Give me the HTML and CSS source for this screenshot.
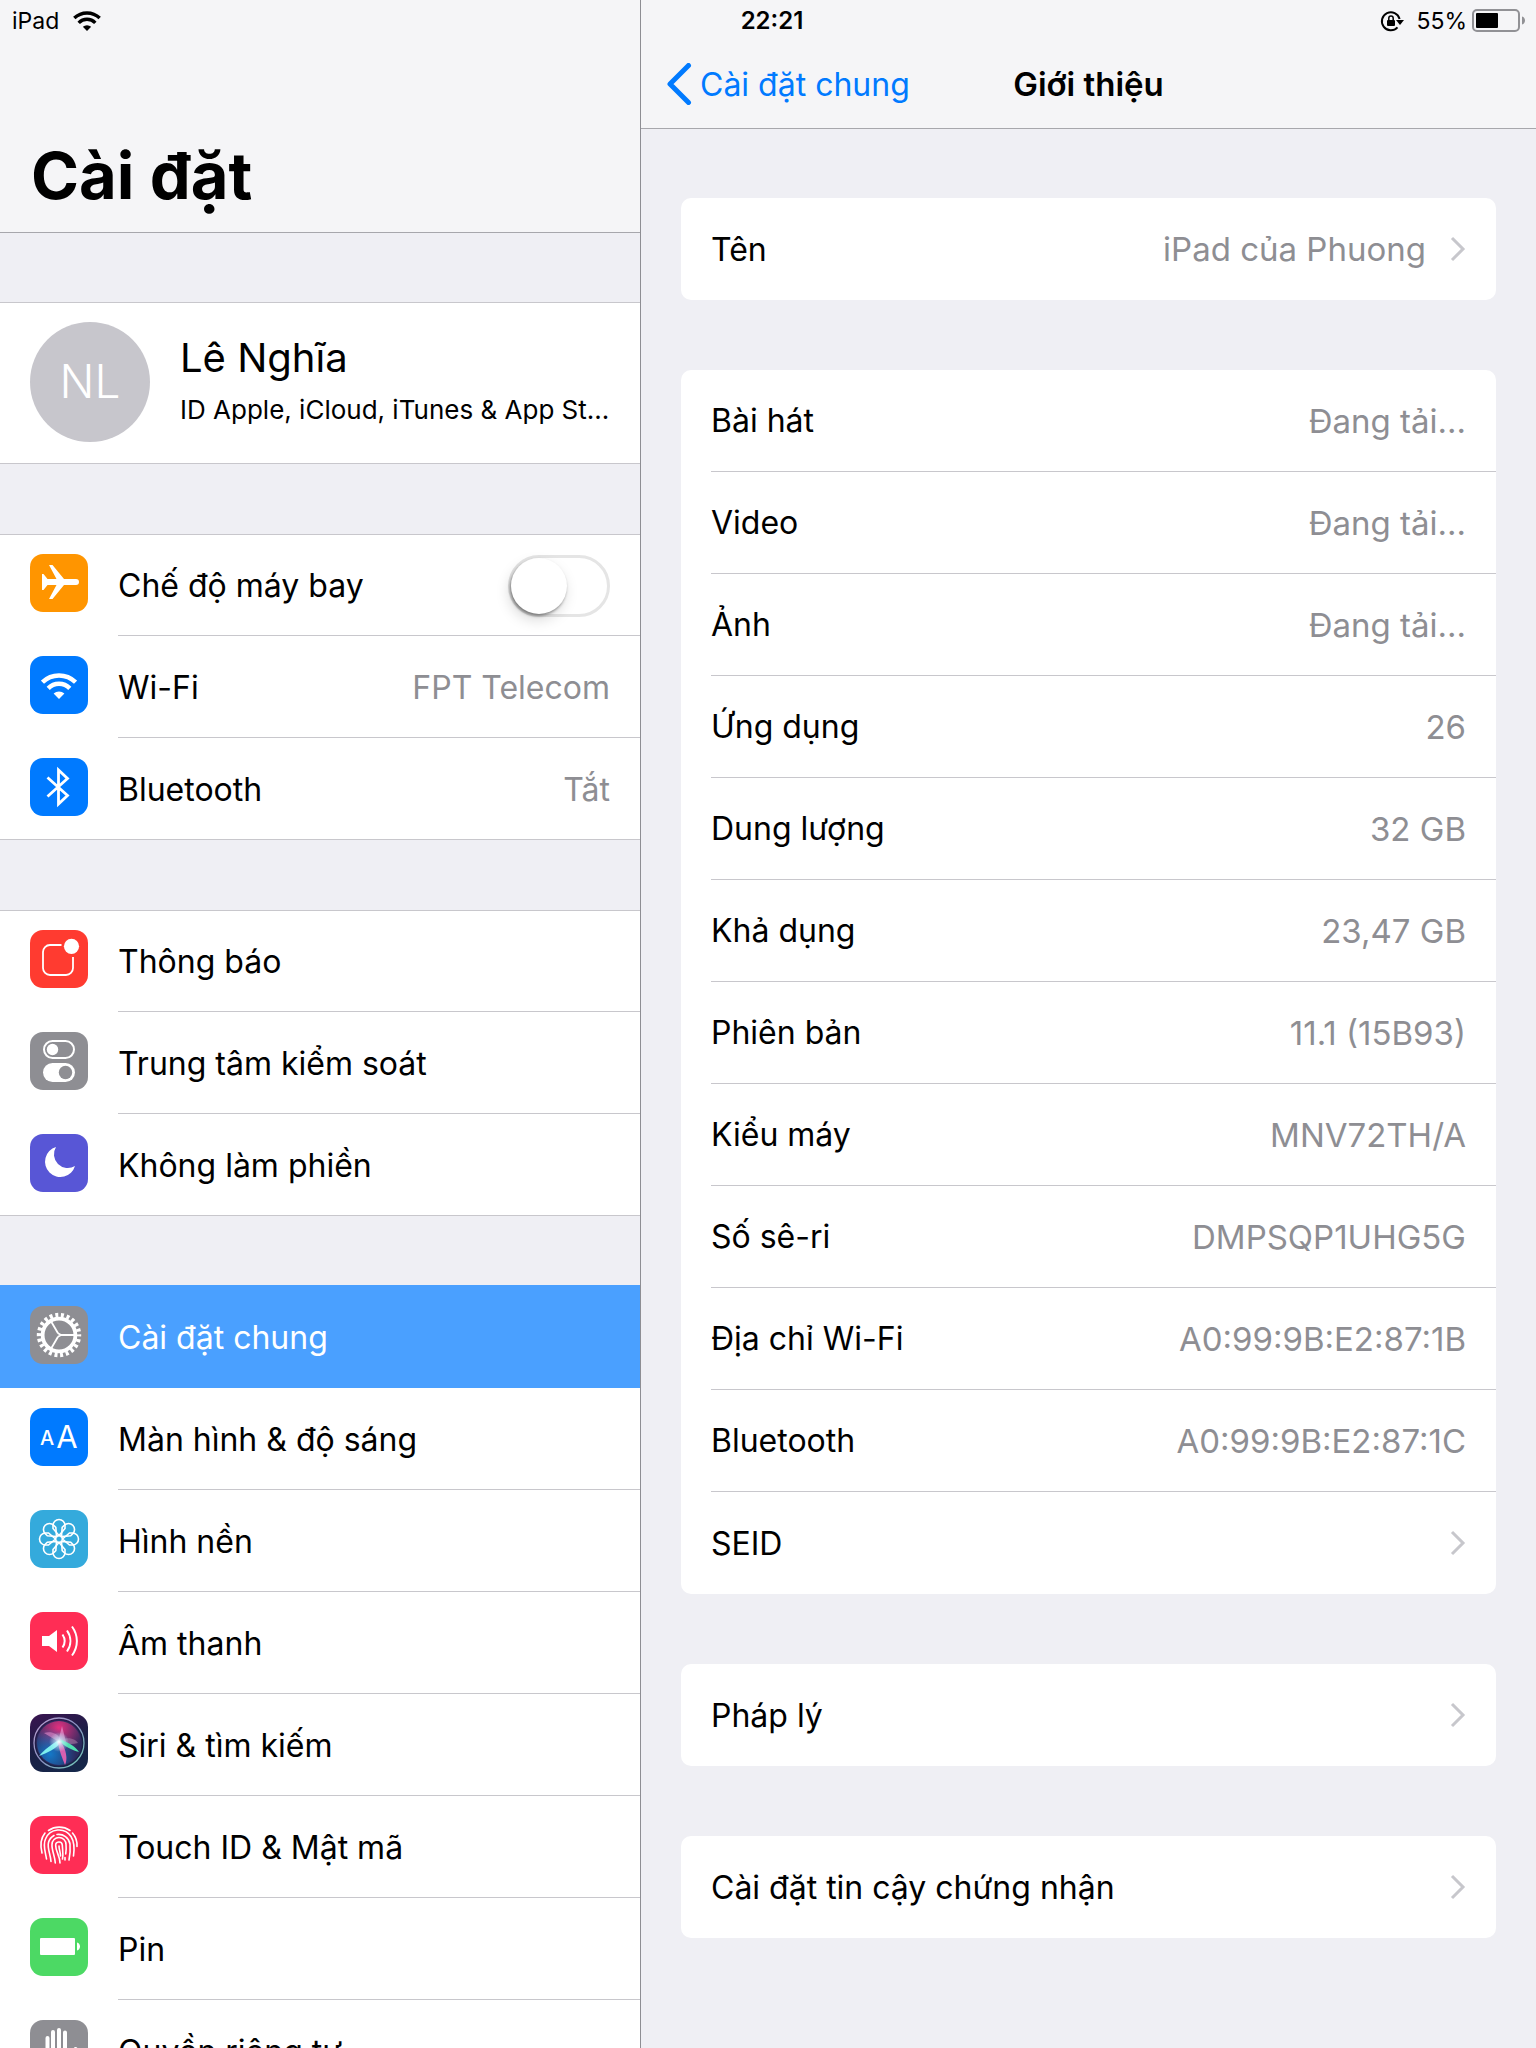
FILE: index.html
```
<!DOCTYPE html>
<html lang="vi">
<head>
  <meta charset="UTF-8">
  <meta name="viewport" content="width=device-width, initial-scale=1.0">
  <title>Cài đặt</title>
  <link rel="stylesheet" href="styles.css">
</head>
<body>
  <svg class="defs" aria-hidden="true">
    <symbol id="wifi" viewBox="0 0 36 26">
      <g fill="none" stroke="currentColor" stroke-width="4.4">
        <path d="M1.5 9.2A23.8 23.8 0 0 1 34.5 9.2"/>
        <path d="M7.2 15.4A15 15 0 0 1 28.8 15.4"/>
      </g>
      <path d="M18 26L12.6 20.6A8 8 0 0 1 23.4 20.6z" fill="currentColor"/>
    </symbol>
    <symbol id="chevron" viewBox="0 0 16 26">
      <path d="M2 2L13 13 2 24" fill="none" stroke="currentColor" stroke-width="3"/>
    </symbol>
  </svg>

  <div class="status-bar">
    <div class="status-left">
      <span>iPad</span>
      <svg class="status-wifi"><use href="#wifi"/></svg>
    </div>
    <strong class="status-time">22:21</strong>
    <div class="status-right">
      <svg class="status-lock" viewBox="0 0 24 22">
        <path d="M17.5 17.4A9 9 0 1 1 19.6 9" fill="none" stroke="currentColor" stroke-width="2"/>
        <path d="M16 10h8l-4 5z" fill="currentColor"/>
        <rect x="7" y="10" width="8" height="6" rx="1" fill="currentColor"/>
        <path d="M8.8 10.5V8.3a2.2 2.2 0 0 1 4.4 0v2.2" fill="none" stroke="currentColor" stroke-width="1.5"/>
      </svg>
      <span>55%</span>
      <svg class="status-battery" viewBox="0 0 54 24">
        <rect x="1" y="1" width="46" height="21" rx="4" fill="none" stroke="#919195" stroke-width="2"/>
        <rect x="4" y="4" width="22" height="15" rx="1" fill="#000"/>
        <path d="M50 7.5c4 1 4 7 0 8z" fill="#919195"/>
      </svg>
    </div>
  </div>

  <div class="split">
    <aside class="sidebar">
      <header class="sidebar-header">
        <h1>Cài đặt</h1>
      </header>

      <nav class="sidebar-list">
        <a class="profile" href="#">
          <span class="avatar">NL</span>
          <span class="profile-text">
            <span class="profile-name">Lê Nghĩa</span>
            <span class="profile-sub">ID Apple, iCloud, iTunes &amp; App St...</span>
          </span>
        </a>

        <ul class="group">
          <li class="row">
            <svg class="icon orange" viewBox="0 0 58 58">
              <path d="M12 20h1.5l4 5h9L19 11h3.5L34 25h12a3 3 0 0 1 0 6H34L22.5 45H19l7.5-14h-9l-4 5H12z" fill="#fff"/>
            </svg>
            <div class="row-body">
              <label for="airplane">Chế độ máy bay</label>
              <input class="switch" type="checkbox" id="airplane">
            </div>
          </li>
          <li>
            <a class="row" href="#">
              <svg class="icon blue" viewBox="0 0 58 58"><use href="#wifi" x="11" y="17" width="36" height="26"/></svg>
              <span class="row-body">Wi-Fi <span class="value">FPT Telecom</span></span>
            </a>
          </li>
          <li>
            <a class="row" href="#">
              <svg class="icon blue" viewBox="0 0 58 58">
                <path d="M17.5 19.5L37.5 37.5 28.5 46V12L37.5 20.5 17.5 38.5" fill="none" stroke="#fff" stroke-width="2.8"/>
              </svg>
              <span class="row-body">Bluetooth <span class="value">Tắt</span></span>
            </a>
          </li>
        </ul>

        <ul class="group">
          <li>
            <a class="row" href="#">
              <svg class="icon red" viewBox="0 0 58 58">
                <path d="M31.5 15H20a7 7 0 0 0-7 7v16a7 7 0 0 0 7 7h16a7 7 0 0 0 7-7V27" fill="none" stroke="#fff" stroke-width="1.8"/>
                <circle cx="41.5" cy="16.3" r="7.6" fill="#fff"/>
              </svg>
              <span class="row-body">Thông báo</span>
            </a>
          </li>
          <li>
            <a class="row" href="#">
              <svg class="icon gray" viewBox="0 0 58 58">
                <rect x="14" y="9" width="30" height="17" rx="8.5" fill="none" stroke="#fff" stroke-width="2"/>
                <circle cx="22.5" cy="17.5" r="5.7" fill="#fff"/>
                <rect x="13" y="31" width="32" height="19" rx="9.5" fill="#fff"/>
                <circle cx="35.5" cy="40.5" r="6.7" fill="#8e8e93"/>
              </svg>
              <span class="row-body">Trung tâm kiểm soát</span>
            </a>
          </li>
          <li>
            <a class="row" href="#">
              <svg class="icon purple" viewBox="0 0 58 58">
                <path d="M26 13A15.3 15.3 0 1 0 45 32A13.8 13.8 0 0 1 26 13z" fill="#fff"/>
              </svg>
              <span class="row-body">Không làm phiền</span>
            </a>
          </li>
        </ul>

        <ul class="group">
          <li>
            <a class="row active" href="#" aria-current="page">
              <svg class="icon gray" viewBox="0 0 58 58">
                <g fill="none" stroke="#fff">
                  <circle cx="29" cy="29" r="16.4" stroke-width="3.8"/>
                  <circle cx="29" cy="29" r="20" stroke-width="4.4" stroke-dasharray="3 2.712" stroke-dashoffset="1.5"/>
                  <path d="M31 29H45M28 27.3L21 15.2M28 30.7L21 42.8M28 27.3L31 29 28 30.7" stroke-width="1.8"/>
                </g>
              </svg>
              <span class="row-body">Cài đặt chung</span>
            </a>
          </li>
          <li>
            <a class="row" href="#">
              <svg class="icon blue" viewBox="0 0 58 58">
                <text class="small-a" x="17" y="37">A</text>
                <text class="large-a" x="37" y="40">A</text>
              </svg>
              <span class="row-body">Màn hình &amp; độ sáng</span>
            </a>
          </li>
          <li>
            <a class="row" href="#">
              <svg class="icon cyan" viewBox="0 0 58 58">
                <g fill="none" stroke="#fff" stroke-width="1.6">
                  <circle cx="29" cy="29" r="3.4"/>
                  <path id="petal" d="M29 25.5L23 18.5V15.500a6 6 0 0 1 12 0v3z"/>
                  <use href="#petal" transform="rotate(45 29 29)"/>
                  <use href="#petal" transform="rotate(90 29 29)"/>
                  <use href="#petal" transform="rotate(135 29 29)"/>
                  <use href="#petal" transform="rotate(180 29 29)"/>
                  <use href="#petal" transform="rotate(225 29 29)"/>
                  <use href="#petal" transform="rotate(270 29 29)"/>
                  <use href="#petal" transform="rotate(315 29 29)"/>
                </g>
              </svg>
              <span class="row-body">Hình nền</span>
            </a>
          </li>
          <li>
            <a class="row" href="#">
              <svg class="icon pink" viewBox="0 0 58 58">
                <path d="M12 24h7l8-6v22l-8-6h-7z" fill="#fff"/>
                <path d="M32.5 22.5c2.7 4 2.7 9 0 13M37 18.5c4.5 6.5 4.5 14.5 0 21M42 14.5c6.5 9 6.5 20 0 29" fill="none" stroke="#fff" stroke-width="2"/>
              </svg>
              <span class="row-body">Âm thanh</span>
            </a>
          </li>
          <li>
            <a class="row" href="#">
              <svg class="icon siri" viewBox="0 0 58 58">
                <defs>
                  <linearGradient id="siri-ring" x1="0" y1="0" x2="1" y2="1">
                    <stop offset="0" stop-color="#b9a0d0"/>
                    <stop offset=".5" stop-color="#8a8fc0"/>
                    <stop offset="1" stop-color="#6fd0b8"/>
                  </linearGradient>
                  <radialGradient id="siri-pink" cx=".5" cy=".15" r=".6">
                    <stop offset="0" stop-color="#e0307f"/>
                    <stop offset="1" stop-color="#e0307f" stop-opacity="0"/>
                  </radialGradient>
                  <radialGradient id="siri-blue" cx=".3" cy=".75" r=".6">
                    <stop offset="0" stop-color="#1478c8"/>
                    <stop offset="1" stop-color="#1478c8" stop-opacity="0"/>
                  </radialGradient>
                  <radialGradient id="siri-glow">
                    <stop offset="0" stop-color="#fff"/>
                    <stop offset=".4" stop-color="#c8f4ff" stop-opacity=".6"/>
                    <stop offset="1" stop-color="#c8f4ff" stop-opacity="0"/>
                  </radialGradient>
                </defs>
                <circle cx="29" cy="29" r="23" fill="#2b2a5e"/>
                <circle cx="29" cy="29" r="22" fill="url(#siri-pink)"/>
                <circle cx="29" cy="29" r="22" fill="url(#siri-blue)"/>
                <path d="M29 28L14 19c6-2 15 0 17 8z" fill="#e08ac8" opacity=".6"/>
                <path d="M28 28l4-16 4 16z" fill="#f0a0d8" opacity=".6"/>
                <path d="M30 26c10-4 16 0 18 3-6 2-12 1-18-1z" fill="#b088b0" opacity=".5"/>
                <path d="M29 26C22 30 14 36 9 42c8-3 17-7 22-14z" fill="#7df0ee"/>
                <path d="M29 27c5 5 13 9 20 11-3-5-10-9-17-12z" fill="#4fe0b0"/>
                <path d="M28 28c1 8 4 16 7 23 3-6 1-16-4-23z" fill="#d860b0"/>
                <circle cx="29" cy="28" r="10" fill="url(#siri-glow)"/>
                <circle cx="29" cy="29" r="25" fill="none" stroke="url(#siri-ring)" stroke-width="1.3"/>
              </svg>
              <span class="row-body">Siri &amp; tìm kiếm</span>
            </a>
          </li>
          <li>
            <a class="row" href="#">
              <svg class="icon pink" viewBox="0 0 58 58">
                <g fill="none" stroke="#fff" stroke-width="1.6" stroke-linecap="round">
                  <path d="M18.5 14.5A19 19 0 0 1 40 14.5"/>
                  <path d="M15 17C10.5 22.5 10 29 12 37M42.5 17C46 21 47.3 25 47 30.5"/>
                  <path d="M16.5 43C15.5 36 12.5 29 15.5 23A14.5 14.5 0 0 1 41 20.5C44.5 26 44.5 33 43.5 40"/>
                  <path d="M21 45.5C20.5 38 17 32 18.5 26.5A11 11 0 0 1 24 19.5M27 18.5A11.5 11.5 0 0 1 40 28C40.5 34 40 39 39 44"/>
                  <path d="M25.3 47C25 40 21.5 34 22 28.5A7 7 0 0 1 36 28.5C36.5 33 36 36 35.7 38M35 41.5V44"/>
                  <path d="M30 47C30 40 25.5 35 25.7 29.5A3.3 3.3 0 0 1 32.3 29C32.5 34 33.5 38 32.5 43"/>
                  <path d="M29 30c0 4 1.5 6 1.5 10"/>
                </g>
              </svg>
              <span class="row-body">Touch ID &amp; Mật mã</span>
            </a>
          </li>
          <li>
            <a class="row" href="#">
              <svg class="icon green" viewBox="0 0 58 58">
                <rect x="10" y="20" width="35" height="17" rx="1" fill="#fff"/>
                <path d="M47 24.5c4 1 4 7 0 8z" fill="#fff"/>
              </svg>
              <span class="row-body">Pin</span>
            </a>
          </li>
          <li>
            <a class="row" href="#">
              <svg class="icon gray" viewBox="0 0 58 58">
                <g fill="none" stroke="#fff" stroke-width="4" stroke-linecap="round">
                  <path d="M17.5 18V34M23 12V32M29 10V32M35 12.5V34"/>
                  <path d="M45.5 29L38 41"/>
                </g>
                <path d="M15.5 31H37v7l5-4c0 8-5 16-13 16-9 0-13.5-6-13.5-14z" fill="#fff"/>
              </svg>
              <span class="row-body">Quyền riêng tư</span>
            </a>
          </li>
        </ul>
      </nav>
    </aside>

    <main class="detail">
      <header class="detail-header">
        <a class="back" href="#">
          <svg class="back-icon" viewBox="0 0 26 42"><path d="M22.5 2.5L4 21 22.5 39.5" fill="none" stroke="currentColor" stroke-width="5" stroke-linecap="round" stroke-linejoin="round"/></svg>
          Cài đặt chung
        </a>
        <h2>Giới thiệu</h2>
      </header>

      <div class="cards">
        <ul class="card">
          <li><a class="info" href="#">Tên <span class="value">iPad của Phuong</span><svg class="chevron"><use href="#chevron"/></svg></a></li>
        </ul>

        <ul class="card">
          <li class="info">Bài hát <span class="value">Đang tải...</span></li>
          <li class="info">Video <span class="value">Đang tải...</span></li>
          <li class="info">Ảnh <span class="value">Đang tải...</span></li>
          <li class="info">Ứng dụng <span class="value">26</span></li>
          <li class="info">Dung lượng <span class="value">32 GB</span></li>
          <li class="info">Khả dụng <span class="value">23,47 GB</span></li>
          <li class="info">Phiên bản <span class="value">11.1 (15B93)</span></li>
          <li class="info">Kiểu máy <span class="value">MNV72TH/A</span></li>
          <li class="info">Số sê-ri <span class="value">DMPSQP1UHG5G</span></li>
          <li class="info">Địa chỉ Wi-Fi <span class="value">A0:99:9B:E2:87:1B</span></li>
          <li class="info">Bluetooth <span class="value">A0:99:9B:E2:87:1C</span></li>
          <li><a class="info" href="#">SEID <svg class="chevron"><use href="#chevron"/></svg></a></li>
        </ul>

        <ul class="card">
          <li><a class="info" href="#">Pháp lý <svg class="chevron"><use href="#chevron"/></svg></a></li>
        </ul>

        <ul class="card">
          <li><a class="info" href="#">Cài đặt tin cậy chứng nhận <svg class="chevron"><use href="#chevron"/></svg></a></li>
        </ul>
      </div>
    </main>
  </div>
</body>
</html>
```
FILE: styles.css
```
* {
  padding: 0;
  margin: 0;
  box-sizing: border-box;
}
body {
  height: 100vh;
  overflow: hidden;
  background-color: #efeff4;
  color: #000;
  font-family: Inter, "Liberation Sans", sans-serif;
  font-size: 32px;
}
ul {
  list-style: none;
}
a {
  color: inherit;
  text-decoration: none;
}
.defs {
  position: absolute;
  width: 0;
  height: 0;
}

/* status bar, lies over both headers */
.status-bar {
  position: absolute;
  top: 0;
  left: 0;
  right: 0;
  display: grid;
  grid-template-columns: 1fr auto 1fr;
  align-items: center;
  height: 41px;
  padding: 0 4px 0 12px;
  font-size: 23px;
}
.status-left,
.status-right {
  display: flex;
  align-items: center;
}
.status-left {
  gap: 14px;
}
.status-right {
  justify-content: flex-end;
  padding-right: 6px;
}
.status-wifi {
  width: 28px;
  height: 20px;
}
.status-time {
  font-size: 24px;
  font-weight: 600;
}
.status-lock {
  width: 24px;
  height: 22px;
  margin-right: 12px;
}
.status-battery {
  width: 54px;
  height: 24px;
  margin-left: 5px;
}

.split {
  display: grid;
  grid-template-columns: 5fr 7fr;
  height: 100%;
}

/* sidebar */
.sidebar {
  min-width: 0;
  overflow: hidden;
}
.sidebar-header {
  display: flex;
  align-items: flex-end;
  height: 233px;
  padding: 0 31px 16px;
  background-color: #f5f5f7;
  border-bottom: 1px solid #a7a7ac;
}
h1 {
  font-size: 65px;
  font-weight: 700;
  line-height: 80px;
}
.sidebar-list {
  display: flex;
  flex-direction: column;
  gap: 70px;
  padding-top: 69px;
}
.profile {
  display: flex;
  align-items: center;
  gap: 30px;
  height: 162px;
  padding: 0 30px 2px;
  background-color: #fff;
  border-top: 1px solid #c8c7cc;
  border-bottom: 1px solid #c8c7cc;
}
.avatar {
  display: flex;
  flex-shrink: 0;
  align-items: center;
  justify-content: center;
  width: 120px;
  height: 120px;
  padding-bottom: 3px;
  border-radius: 50%;
  background-color: #c7c6cc;
  color: #fff;
  font-size: 46px;
  font-weight: 350;
}
.profile-text {
  display: flex;
  flex-direction: column;
  gap: 8px;
  padding-bottom: 5px;
  white-space: nowrap;
}
.profile-name {
  font-size: 40px;
  line-height: 52px;
}
.profile-sub {
  font-size: 26px;
  line-height: 36px;
}
.group {
  background-color: #fff;
  box-shadow: inset 0 1px #c8c7cc, inset 0 -1px #c8c7cc;
}
.row {
  display: flex;
  gap: 30px;
  height: 102px;
  padding-left: 30px;
}
.row-body {
  display: flex;
  flex: 1;
  align-items: center;
  justify-content: space-between;
  padding: 2px 30px 0 0;
  border-bottom: 1px solid #c8c7cc;
}
.active {
  background-color: #4aa0ff;
  box-shadow: 0 -1px #4aa0ff;
  color: #fff;
}
.active .row-body {
  border-color: transparent;
}
.value {
  color: #8e8e93;
}
.icon {
  flex-shrink: 0;
  width: 58px;
  height: 58px;
  margin-top: 20px;
  border-radius: 13px;
  color: #fff;
}
.orange {
  background-color: #ff9500;
}
.blue {
  background-color: #007aff;
}
.red {
  background-color: #ff3b30;
}
.gray {
  background-color: #8e8e93;
}
.purple {
  background-color: #5856d6;
}
.cyan {
  background-color: #34aadc;
}
.pink {
  background-color: #ff2d55;
}
.green {
  background-color: #4cd964;
}
.siri {
  background: linear-gradient(160deg, #3a1450, #1a1f45 50%, #14284a);
}
.small-a,
.large-a {
  fill: #fff;
  text-anchor: middle;
}
.small-a {
  font-size: 20px;
  font-weight: 500;
}
.large-a {
  font-size: 31px;
}
.switch {
  appearance: none;
  width: 102px;
  height: 62px;
  border: 3px solid #e5e5e5;
  border-radius: 31px;
  background-color: #fff;
}
.switch::before {
  content: "";
  display: block;
  width: 56px;
  height: 56px;
  border-radius: 50%;
  background-color: #fff;
  box-shadow: -1px 2px 3px rgba(0, 0, 0, 0.4), -2px 6px 14px rgba(0, 0, 0, 0.15);
}
.switch:checked {
  border-color: #4cd964;
  background-color: #4cd964;
}
.switch:checked::before {
  margin-left: auto;
}

/* detail pane */
.detail {
  min-width: 0;
  overflow: hidden;
  border-left: 1px solid #8e8e93;
}
.detail-header {
  display: grid;
  grid-template-columns: 1fr auto 1fr;
  align-items: center;
  height: 129px;
  padding: 40px 25px 0;
  background-color: #f5f5f7;
  border-bottom: 1px solid #a7a7ac;
}
.back {
  display: flex;
  align-items: center;
  gap: 8px;
  color: #007aff;
}
.back-icon {
  width: 26px;
  height: 42px;
}
h2 {
  font-size: 33px;
  font-weight: 600;
}
.cards {
  display: flex;
  flex-direction: column;
  gap: 70px;
  padding: 69px 40px;
}
.card {
  padding-left: 30px;
  background-color: #fff;
  border-radius: 10px;
}
.info {
  display: flex;
  align-items: center;
  height: 102px;
  padding-right: 30px;
}
.card li:not(:last-child) {
  border-bottom: 1px solid #c8c7cc;
}
.info .value {
  margin-left: auto;
  font-size: 33px;
}
.chevron {
  width: 16px;
  height: 26px;
  margin-left: auto;
  color: #c7c7cc;
}
.value + .chevron {
  margin-left: 24px;
}
```
